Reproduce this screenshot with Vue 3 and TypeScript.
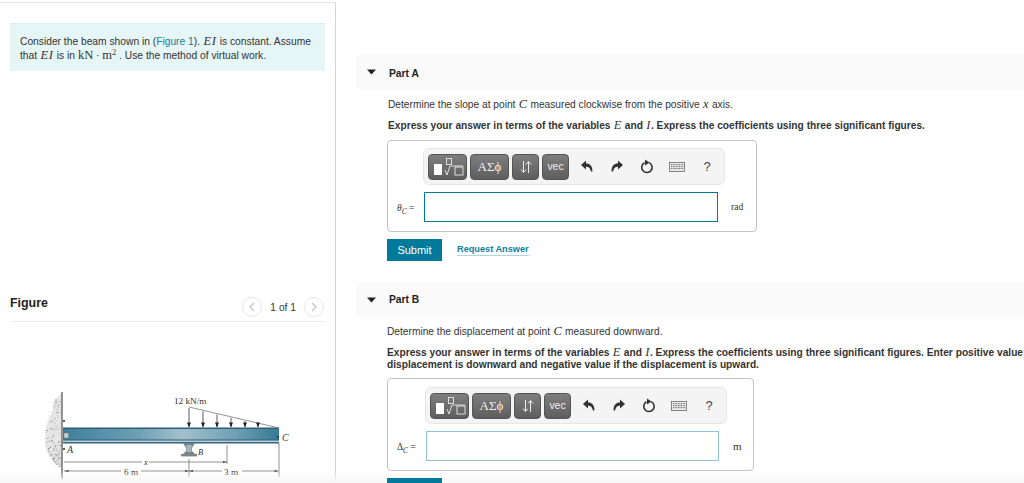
<script setup lang="ts">
interface Seg { t: string; m?: boolean }
interface Part {
  id: string
  name: string
  desc: Seg[]
  bold: Seg[][]
  sym: string
  sub: string
  unit: string
  showLink: boolean
}
const parts: Part[] = [
  {
    id: 'a',
    name: 'Part A',
    desc: [{ t: 'Determine the slope at point ' }, { t: 'C', m: true }, { t: ' measured clockwise from the positive ' }, { t: 'x', m: true }, { t: ' axis.' }],
    bold: [[{ t: 'Express your answer in terms of the variables ' }, { t: 'E', m: true }, { t: ' and ' }, { t: 'I', m: true }, { t: '. Express the coefficients using three significant figures.' }]],
    sym: 'θ',
    sub: 'C',
    unit: 'rad',
    showLink: true,
  },
  {
    id: 'b',
    name: 'Part B',
    desc: [{ t: 'Determine the displacement at point ' }, { t: 'C', m: true }, { t: ' measured downward.' }],
    bold: [
      [{ t: 'Express your answer in terms of the variables ' }, { t: 'E', m: true }, { t: ' and ' }, { t: 'I', m: true }, { t: '. Express the coefficients using three significant figures. Enter positive value if the' }],
      [{ t: 'displacement is downward and negative value if the displacement is upward.' }],
    ],
    sym: 'Δ',
    sub: 'C',
    unit: 'm',
    showLink: false,
  },
]

let seed = 7
const rnd = () => {
  seed = (seed * 16807) % 2147483647
  return seed / 2147483647
}
const dots = Array.from({ length: 170 }, () => {
  const y = 398 + rnd() * 68
  const bulge = 15 * Math.sin(((y - 392) / 78) * Math.PI)
  return { x: 61 - rnd() * (bulge + 2), y, r: 0.25 + rnd() * 0.5, o: 0.2 + rnd() * 0.4 }
})
const arrows = [189, 203, 217, 231, 245, 258]
const keyRows = [0, 1, 2]
const keyCols = [0, 1, 2, 3, 4, 5, 6, 7]
</script>

<template>
  <div class="page">
    <aside class="left">
      <div class="info">
        <div class="info-line">Consider the beam shown in (<span class="link">Figure 1</span>). <span class="math ei">EI</span> is constant. Assume</div>
        <div class="info-line">that <span class="math ei">EI</span> is in <span class="roman">kN</span> · <span class="roman">m</span><sup class="sq">2</sup> . Use the method of virtual work.</div>
      </div>
      <div class="fig-head">
        <span class="fig-title">Figure</span>
        <div class="pager">
          <span class="circle">
            <svg width="8" height="10" viewBox="0 0 8 10"><path d="M6 1 2 5l4 4" fill="none" stroke="#c4c4c4" stroke-width="1.2" /></svg>
          </span>
          <span class="count">1 of 1</span>
          <span class="circle">
            <svg width="8" height="10" viewBox="0 0 8 10"><path d="M2 1l4 4-4 4" fill="none" stroke="#c4c4c4" stroke-width="1.2" /></svg>
          </span>
        </div>
      </div>
      <svg class="beam" width="325" height="161" viewBox="10 322 325 161">
        <defs>
          <linearGradient id="bh" x1="0" x2="1" y1="0" y2="0">
            <stop offset="0" stop-color="#3d7f9a" />
            <stop offset="0.35" stop-color="#6f9fb4" />
            <stop offset="0.55" stop-color="#a3c0cc" />
            <stop offset="0.8" stop-color="#6e9fb3" />
            <stop offset="1" stop-color="#357a94" />
          </linearGradient>
          <filter id="soft" x="-10%" y="-10%" width="120%" height="120%"><feGaussianBlur stdDeviation="0.4" /></filter>
        </defs>
        <g filter="url(#soft)">
          <path d="M62 392c-5 5-9 7-9 13s-3 10-5 15-3 12-3 18 1 12 4 17 7 9 13 11z" fill="#e6e6e6" />
          <circle v-for="(d, i) in dots" :key="i" :cx="d.x" :cy="d.y" :r="d.r" fill="#555" :opacity="d.o" />
          <path d="M62 391v87" stroke="#77797b" stroke-width="1.6" />
          <rect x="63" y="426.5" width="216" height="16" fill="#2f5f74" />
          <rect x="63" y="428" width="216" height="10.5" fill="url(#bh)" />
          <rect x="63" y="439.5" width="216" height="1.6" fill="#b6d0da" />
          <rect x="64" y="432" width="4.5" height="5" fill="#c9cfd0" stroke="#666" stroke-width="0.4" />
          <circle cx="64" cy="420" r="1" fill="#222" />
          <circle cx="64" cy="448" r="1" fill="#222" />
          <circle cx="278" cy="436" r="0.9" fill="#222" />
          <g stroke="#666" stroke-width="0.7" fill="none">
            <path d="M189 406 279 427" />
            <path d="M64 461H142M149 461H227M227 444V463" />
            <path d="M64 470H121M141 470H222M242 470H278M279 442V476M189 458V476" />
          </g>
          <g v-for="x in arrows" :key="x">
            <path :d="`M${x} ${407 + (x - 189) * 0.233}V426`" stroke="#333" stroke-width="0.8" />
            <path :d="`M${x - 2} 421.5h4l-2 5z`" fill="#222" />
          </g>
          <path d="M183 442h12l-3 5v3l3 3h-12l3-3v-3z" fill="#75868c" />
          <rect x="186.5" y="444" width="5" height="7" fill="#a9b8bc" />
          <rect x="181" y="453" width="16" height="2.4" fill="#7d8487" />
          <path d="M64.5 470l4-1v2zM278.5 470l-4-1v2zM189 470l-4-1v2zM189 470l4-1v2zM227 461l-4-1v2z" fill="#444" />
        </g>
        <text x="174" y="403" class="dim">12 kN/m</text>
        <text x="124" y="474" class="dim">6 m</text>
        <text x="224" y="474" class="dim">3 m</text>
        <text x="144" y="464" class="lab small">x</text>
        <text x="67" y="452" class="lab">A</text>
        <text x="198" y="454" class="lab small">B</text>
        <text x="282" y="440" class="lab">C</text>
      </svg>
    </aside>

    <main class="right">
      <section v-for="p in parts" :key="p.id" class="part" :class="'part-' + p.id">
        <header class="part-head">
          <svg width="9" height="6" viewBox="0 0 9 6"><path d="M0 .5h9L4.500 5.500z" fill="#222" /></svg>
          <span class="part-name">{{ p.name }}</span>
        </header>
        <div class="body">
          <p class="desc">
            <span v-for="(s, i) in p.desc" :key="i" :class="{ math: s.m }">{{ s.t }}</span>
          </p>
          <div class="bold">
            <div v-for="(line, li) in p.bold" :key="li" class="bold-line">
              <span v-for="(s, i) in line" :key="i" :class="{ math: s.m }">{{ s.t }}</span>
            </div>
          </div>
          <div class="answer">
            <div class="toolbar">
              <span class="btn b1">
                <svg width="37" height="24" viewBox="0 0 37 24">
                  <rect x="5" y="9" width="8" height="11" fill="#fff" />
                  <g fill="none" stroke="#e8e8e8" stroke-width="0.9">
                    <rect x="17.500" y="3.500" width="5" height="6" />
                    <path d="M16 15l2 5 3-9h13" />
                    <rect x="26" y="12" width="8" height="8" />
                  </g>
                </svg>
              </span>
              <span class="btn b2">ΑΣϕ</span>
              <span class="btn b3">
                <svg width="12" height="14" viewBox="0 0 12 14">
                  <g fill="none" stroke="#ededed" stroke-width="1">
                    <path d="M3.500 1v11M1 9.500l2.500 3 2.500-3M8.500 13V2M6 4.500l2.500-3 2.500 3" />
                  </g>
                </svg>
              </span>
              <span class="btn b4">vec</span>
              <span class="tool">
                <svg width="14" height="13" viewBox="0 0 14 13"><path d="M6 .5 1 5l5 4.500V6.800c2.500 0 4 1 5 4.700.8 0 1.500 0 1.500 0C12.500 6 10 3.500 6 3.200z" fill="#333" /></svg>
              </span>
              <span class="tool">
                <svg width="14" height="13" viewBox="0 0 14 13"><path d="M8 .5 13 5 8 9.500V6.800c-2.500 0-4 1-5 4.700-.8 0-1.500 0-1.500 0C1.500 6 4 3.500 8 3.200z" fill="#333" /></svg>
              </span>
              <span class="tool">
                <svg width="14" height="15" viewBox="0 0 14 15"><path d="M9.200 3.600A5.200 5.200 0 1 1 4.500 3.700" fill="none" stroke="#333" stroke-width="1.600" /><path d="M5 .5v6L9.500 3.500z" fill="#333" /></svg>
              </span>
              <span class="tool">
                <svg width="16" height="10" viewBox="0 0 16 10">
                  <rect x=".5" y=".5" width="15" height="9" fill="#eee" stroke="#666" stroke-width="0.8" />
                  <g v-for="r in keyRows" :key="r">
                    <rect v-for="c in keyCols" :key="c" :x="2 + c * 1.6" :y="2 + r * 2" width="1" height="1.200" fill="#777" />
                  </g>
                </svg>
              </span>
              <span class="tool help">?</span>
            </div>
            <div class="row">
              <span class="sym"><i v-if="p.id === 'a'">{{ p.sym }}</i><template v-else>{{ p.sym }}</template><sub>{{ p.sub }}</sub><span class="eq">=</span></span>
              <div class="input"></div>
              <span class="unit">{{ p.unit }}</span>
            </div>
          </div>
          <div class="actions">
            <span class="submit">Submit</span>
            <span v-if="p.showLink" class="request">Request Answer</span>
          </div>
        </div>
      </section>
    </main>
    <div class="fade"></div>
  </div>
</template>

<style>
html, body { margin: 0; background: #fff; overflow: hidden; }
</style>

<style scoped>
.page {
  position: relative;
  display: flex;
  width: 1024px;
  height: 483px;
  padding-top: 2px;
  box-sizing: border-box;
  overflow: hidden;
  font-family: "Liberation Sans", Arial, sans-serif;
  color: #333;
  font-size: 10.250px;
}
.left {
  width: 336px;
  flex: none;
  box-sizing: border-box;
  border-top: 1px solid #e3e6ea;
  border-right: 1px solid #ccd5e1;
  padding: 20px 10px 0;
}
.info {
  width: 315px;
  height: 48px;
  box-sizing: border-box;
  padding: 10.500px 10px 0;
  background: #e6f5f6;
  border-top: 1px solid #dcebed;
  white-space: nowrap;
}
.info-line { height: 14px; line-height: 14px; }
.link { color: #0f7f9f; }
.math { font-family: "Liberation Serif", "Times New Roman", serif; font-style: italic; font-size: 12.500px; line-height: 0; margin: 0 .5px; }
.ei { letter-spacing: 0.6px; }
.roman { font-family: "Liberation Serif", serif; font-size: 12.500px; line-height: 0; }
.sq { font-family: "Liberation Serif", serif; font-size: 8.500px; line-height: 0; vertical-align: 4px; }
.fig-head {
  display: flex;
  align-items: center;
  justify-content: space-between;
  width: 315px;
  height: 29px;
  box-sizing: border-box;
  margin-top: 222px;
  border-bottom: 1px solid #ececec;
  padding-bottom: 9px;
}
.fig-title { font-size: 12.400px; font-weight: 700; color: #222; }
.pager { display: flex; align-items: center; margin-top: 9px; margin-right: 1px; }
.circle {
  display: flex;
  align-items: center;
  justify-content: center;
  width: 20px;
  height: 20px;
  box-sizing: border-box;
  border: 1px solid #e6e6e6;
  border-radius: 50%;
}
.count { margin: 0 8px; }
.beam { display: block; margin-top: 1px; }
.dim { font-family: "Liberation Serif", serif; font-size: 9.200px; fill: #333; }
.lab { font-family: "Liberation Serif", serif; font-style: italic; font-size: 10px; fill: #333; }
.lab.small { font-size: 8.500px; }
.right {
  flex: 1;
  min-width: 0;
  padding: 52px 0 0 20px;
  overflow: hidden;
  font-size: 10.200px;
}
.part-head {
  display: flex;
  align-items: center;
  height: 36px;
  padding-left: 11px;
  background: #fafafa;
}
.part-name { margin-left: 13px; font-size: 10.250px; font-weight: 700; color: #222; }
.part-a .part-name { padding-top: 2px; }
.part-b { margin-top: 21px; }
.part-b .part-head { height: 35px; }
.body { padding: 8px 0 0 31px; }
.part-a .desc, .part-a .bold { margin-left: 1px; }
.desc { margin: 0; line-height: 14px; white-space: nowrap; }
.bold { margin-top: 7px; font-weight: 700; line-height: 14px; white-space: nowrap; }
.part-b .bold { margin-top: 8px; line-height: 12px; }
.bold .math { font-weight: 400; }
.answer {
  width: 370px;
  height: 92px;
  box-sizing: border-box;
  margin-top: 7px;
  border: 1px solid #c4c4c4;
  border-radius: 4px;
  padding: 7px 0 0 35px;
}
.part-b .answer { width: 367px; height: 93px; margin-top: 7px; padding: 8px 0 0 37px; }
.toolbar {
  display: flex;
  align-items: center;
  width: 302px;
  height: 37px;
  box-sizing: border-box;
  padding: 0 4px;
  background: #f4f4f4;
  border: 1px solid #e6e6e6;
  border-radius: 6px;
}
.btn {
  display: flex;
  align-items: center;
  justify-content: center;
  flex: none;
  height: 26px;
  box-sizing: border-box;
  margin-right: 3px;
  color: #f0f0f0;
  background: linear-gradient(#7e7e7e, #5e5e5e);
  border: 1px solid #555;
  border-radius: 4px;
}
.b1 { width: 39px; }
.b2 { width: 39px; font-family: "Liberation Serif", serif; font-size: 13px; }
.b3 { width: 27px; }
.b4 { width: 27px; font-size: 10.400px; }
.tool {
  display: flex;
  align-items: center;
  justify-content: center;
  flex: none;
  width: 30px;
  height: 26px;
}
.help { font-size: 13px; color: #444; }
.row { display: flex; align-items: center; margin-top: 7px; }
.sym {
  width: 27px;
  margin-left: -26px;
  font-family: "Liberation Serif", serif;
  font-size: 9.500px;
  white-space: nowrap;
}
.sym sub { font-style: italic; font-size: 7.500px; line-height: 0; vertical-align: -3px; }
.eq { margin-left: 2px; font-size: 10px; }
.input {
  width: 294px;
  height: 30px;
  box-sizing: border-box;
  border: 1px solid #00799a;
}
.part-b .sym { margin-left: -28px; width: 29px; }
.part-b .input { width: 293px; height: 30px; border-color: #8cc6d8; }
.unit { margin-left: 13px; font-family: "Liberation Serif", serif; font-size: 9.500px; color: #333; }
.part-b .unit { margin-left: 14px; font-size: 11px; }
.actions { display: flex; align-items: center; margin-top: 7px; }
.submit {
  position: relative;
  z-index: 1;
  display: flex;
  align-items: center;
  justify-content: center;
  width: 55px;
  height: 22px;
  background: #007a9b;
  color: #fff;
  font-size: 11px;
}
.request {
  margin-left: 15px;
  color: #0f7f9f;
  font-size: 9.200px;
  font-weight: 700;
  border-bottom: 1px solid #a9d7e4;
  line-height: 11px;
}
.fade {
  position: absolute;
  left: 0;
  right: 0;
  bottom: 0;
  height: 12px;
  background: linear-gradient(rgba(247, 247, 247, 0), #f7f7f7);
  pointer-events: none;
}
</style>
